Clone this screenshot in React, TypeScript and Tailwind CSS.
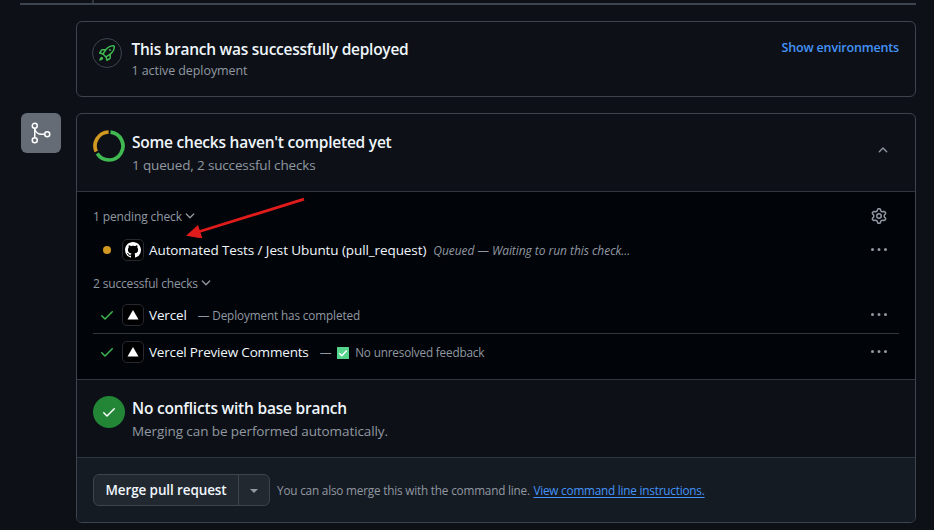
import type { ReactNode } from 'react';

const paths = {
  rocket:
    'M14.064 0h.186C15.216 0 16 .784 16 1.75v.186a8.752 8.752 0 0 1-2.564 6.186l-.458.459c-.314.314-.641.616-.979.904v3.207c0 .608-.315 1.172-.833 1.49l-2.774 1.707a.749.749 0 0 1-1.11-.418l-.954-3.102a1.214 1.214 0 0 1-.145-.125L3.754 9.816a1.218 1.218 0 0 1-.124-.145L.528 8.717a.749.749 0 0 1-.418-1.11l1.71-2.774A1.748 1.748 0 0 1 3.31 4h3.204c.288-.338.59-.665.904-.979l.459-.458A8.749 8.749 0 0 1 14.064 0ZM8.938 3.623h-.002l-.458.458c-.76.76-1.437 1.598-2.02 2.5l-1.5 2.317 2.143 2.143 2.317-1.5c.902-.583 1.74-1.26 2.499-2.02l.459-.458a7.25 7.25 0 0 0 2.123-5.127V1.75a.25.25 0 0 0-.25-.25h-.186a7.249 7.249 0 0 0-5.125 2.123ZM3.56 14.56c-.732.732-2.334 1.045-3.005 1.148a.234.234 0 0 1-.201-.064.234.234 0 0 1-.064-.201c.103-.671.416-2.273 1.15-3.003a1.502 1.502 0 1 1 2.12 2.12Zm6.94-3.935c-.088.06-.177.118-.266.175l-2.35 1.521.548 1.783 1.949-1.2a.25.25 0 0 0 .119-.213ZM3.678 8.116 5.2 5.766c.058-.09.117-.178.176-.266H3.309a.25.25 0 0 0-.213.119l-1.2 1.95ZM12 5a1 1 0 1 1-2 0 1 1 0 0 1 2 0Z',
  gear:
    'M8 0a8.2 8.2 0 0 1 .701.031C9.444.095 9.99.645 10.16 1.29l.288 1.107c.018.066.079.158.212.224.231.114.454.243.668.386.123.082.233.09.299.071l1.103-.303c.644-.176 1.392.021 1.82.63.27.385.506.792.704 1.218.315.675.111 1.422-.364 1.891l-.814.806c-.049.048-.098.147-.088.294.016.257.016.515 0 .772-.01.147.038.246.088.294l.814.806c.475.469.679 1.216.364 1.891a7.977 7.977 0 0 1-.704 1.217c-.428.61-1.176.807-1.82.63l-1.102-.302c-.067-.019-.177-.011-.3.071a5.909 5.909 0 0 1-.668.386c-.133.066-.194.158-.211.224l-.29 1.106c-.168.646-.715 1.196-1.458 1.26a8.006 8.006 0 0 1-1.402 0c-.743-.064-1.289-.614-1.458-1.26l-.289-1.106c-.018-.066-.079-.158-.212-.224a5.738 5.738 0 0 1-.668-.386c-.123-.082-.233-.09-.299-.071l-1.103.303c-.644.176-1.392-.021-1.82-.63a8.12 8.12 0 0 1-.704-1.218c-.315-.675-.111-1.422.363-1.891l.815-.806c.05-.048.098-.147.088-.294a6.214 6.214 0 0 1 0-.772c.01-.147-.038-.246-.088-.294l-.815-.806C.635 6.045.431 5.298.746 4.623a7.92 7.92 0 0 1 .704-1.217c.428-.61 1.176-.807 1.82-.63l1.102.302c.067.019.177.011.3-.071.214-.143.437-.272.668-.386.133-.066.194-.158.211-.224l.29-1.106C6.009.645 6.556.095 7.299.03 7.53.01 7.764 0 8 0Zm-.571 1.525c-.036.003-.108.036-.137.146l-.289 1.105c-.147.561-.549.967-.998 1.189-.173.086-.34.183-.5.29-.417.278-.97.423-1.529.27l-1.103-.303c-.109-.03-.175.016-.195.045-.22.312-.412.644-.573.99-.014.031-.021.11.059.19l.815.806c.411.406.562.957.53 1.456a4.709 4.709 0 0 0 0 .582c.032.499-.119 1.05-.53 1.456l-.815.806c-.081.08-.073.159-.059.19.162.346.353.677.573.989.02.03.085.076.195.046l1.102-.303c.56-.153 1.113-.008 1.53.27.161.107.328.204.501.29.447.222.85.629.997 1.189l.289 1.105c.029.109.101.143.137.146a6.6 6.6 0 0 0 1.142 0c.036-.003.108-.036.137-.146l.289-1.105c.147-.561.549-.967.998-1.189.173-.086.34-.183.5-.29.417-.278.97-.423 1.529-.27l1.103.303c.109.029.175-.016.195-.045.22-.313.411-.644.573-.99.014-.031.021-.11-.059-.19l-.815-.806c-.411-.406-.562-.957-.53-1.456a4.709 4.709 0 0 0 0-.582c-.032-.499.119-1.05.53-1.456l.815-.806c.081-.08.073-.159.059-.19a6.464 6.464 0 0 0-.573-.989c-.02-.03-.085-.076-.195-.046l-1.102.303c-.56.153-1.113.008-1.53-.27a4.44 4.44 0 0 0-.501-.29c-.447-.222-.85-.629-.997-1.189l-.289-1.105c-.029-.11-.101-.143-.137-.146a6.6 6.6 0 0 0-1.142 0ZM11 8a3 3 0 1 1-6 0 3 3 0 0 1 6 0ZM9.5 8a1.5 1.5 0 1 0-3.001.001A1.5 1.5 0 0 0 9.5 8Z',
  check:
    'M13.78 4.22a.75.75 0 0 1 0 1.06l-7.25 7.25a.75.75 0 0 1-1.06 0L2.22 9.28a.751.751 0 0 1 .018-1.042.751.751 0 0 1 1.042-.018L6 10.94l6.72-6.72a.75.75 0 0 1 1.06 0Z',
  chevronDown:
    'M12.78 5.22a.749.749 0 0 1 0 1.06l-4.25 4.25a.749.749 0 0 1-1.06 0L3.22 6.28a.749.749 0 1 1 1.06-1.06L8 8.939l3.72-3.719a.749.749 0 0 1 1.06 0Z',
  chevronUp:
    'M3.22 10.53a.749.749 0 0 1 0-1.06l4.25-4.25a.749.749 0 0 1 1.06 0l4.25 4.25a.749.749 0 1 1-1.06 1.06L8 6.811 4.28 10.53a.749.749 0 0 1-1.06 0Z',
  kebab:
    'M8 9a1.5 1.5 0 1 0 0-3 1.5 1.5 0 0 0 0 3ZM1.5 9a1.5 1.5 0 1 0 0-3 1.5 1.5 0 0 0 0 3Zm13 0a1.5 1.5 0 1 0 0-3 1.5 1.5 0 0 0 0 3Z',
  github:
    'M8 0c4.42 0 8 3.58 8 8a8.013 8.013 0 0 1-5.45 7.59c-.4.08-.55-.17-.55-.38 0-.27.01-1.13.01-2.2 0-.75-.25-1.23-.54-1.48 1.78-.2 3.65-.88 3.65-3.95 0-.88-.31-1.59-.82-2.15.08-.2.36-1.02-.08-2.12 0 0-.67-.22-2.2.82-.64-.18-1.32-.27-2-.27-.68 0-1.36.09-2 .27-1.53-1.03-2.2-.82-2.2-.82-.44 1.1-.16 1.92-.08 2.12-.51.56-.82 1.28-.82 2.15 0 3.06 1.86 3.75 3.64 3.95-.23.2-.44.55-.51 1.07-.46.21-1.61.55-2.33-.66-.15-.24-.6-.83-1.23-.82-.67.01-.27.38.01.53.34.19.73.9.82 1.13.16.45.68 1.31 2.69.94 0 .67.01 1.3.01 1.49 0 .21-.15.45-.55.38A7.995 7.995 0 0 1 0 8c0-4.42 3.58-8 8-8Z',
};

function Icon({ name, className }: { name: keyof typeof paths; className: string }) {
  return (
    <svg viewBox="0 0 16 16" fill="currentColor" className={`shrink-0 ${className}`}>
      <path d={paths[name]} />
    </svg>
  );
}

function MergeIcon() {
  return (
    <svg viewBox="0 0 24 24" fill="none" stroke="currentColor" strokeWidth="1.5" className="size-6 text-white">
      <circle cx="5.75" cy="4.75" r="2.5" />
      <circle cx="5.75" cy="19.25" r="2.5" />
      <circle cx="18.25" cy="13.25" r="2.5" />
      <path d="M5.75 7.25v9.5M5.75 7.25c.5 3.5 3.5 6 7 6h3" />
    </svg>
  );
}

function StatusRing() {
  return (
    <svg viewBox="0 0 32 32" fill="none" strokeWidth="3.7" className="size-8 shrink-0">
      <path d="M17.5 2.08A14 14 0 1 1 4.2 23.6" stroke="#3fb950" />
      <path d="M3.2 21.6A14 14 0 0 1 15.6 2" stroke="#d29922" />
    </svg>
  );
}

function Avatar({ children }: { children: ReactNode }) {
  return (
    <span className="flex size-[22px] shrink-0 items-center justify-center rounded-[5px] border border-[#26292e] bg-black text-white">
      {children}
    </span>
  );
}

function Triangle() {
  return (
    <svg viewBox="0 0 12 10" className="h-[10px] w-[12px]">
      <path d="M6 0 11.5 9.5H.5Z" fill="#fff" />
    </svg>
  );
}

function Row({ status, avatar, title, note }: { status: ReactNode; avatar: ReactNode; title: ReactNode; note: ReactNode }) {
  return (
    <div className="flex h-9 items-center">
      <span className="flex w-7 justify-center">{status}</span>
      <span className="ml-px flex">
        <Avatar>{avatar}</Avatar>
      </span>
      <span className="ml-[5px] text-[13.5px] font-medium text-[#f0f6fc]">{title}</span>
      {note}
      <Icon name="kebab" className="mr-3 ml-auto size-4 text-[#9198a1]" />
    </div>
  );
}

export default function App() {
  return (
    <div className="relative h-[530px] w-[934px] overflow-hidden bg-[#0d1117] font-['Open_Sans','Noto_Sans',sans-serif] whitespace-nowrap text-[#9198a1]">
      <div className="ml-5 h-[5px] w-[896px] border-b-2 border-[#3d444d]">
        <div className="ml-[72px] h-[3px] w-[2px] bg-[#30363d]" />
      </div>

      <div className="mt-4 ml-[76px] flex h-[76px] w-[840px] items-start rounded-md border border-[#3d444d] pt-4 pr-4 pl-[15px]">
        <span className="flex size-[30px] items-center justify-center rounded-full border border-[#3d444d] text-[#3fb950]">
          <Icon name="rocket" className="size-4" />
        </span>
        <div className="ml-[9.5px]">
          <h3 className="text-[15.5px] leading-[23px] font-semibold tracking-[-0.26px] text-[#f0f6fc]">
            This branch was successfully deployed
          </h3>
          <p className="text-[12.5px] leading-5 tracking-[-0.075px]">1 active deployment</p>
        </div>
        <a className="ml-auto text-[12.5px] leading-5 font-semibold tracking-[-0.163px] text-[#4493f8]">Show environments</a>
      </div>

      <div className="mt-4 flex">
        <span className="mr-[15px] ml-[21px] flex size-10 items-center justify-center rounded-md bg-[#656c76]">
          <MergeIcon />
        </span>
        <div className="h-[410px] w-[840px] overflow-hidden rounded-md border border-[#3d444d]">
          <div className="flex h-[78px] items-start border-b border-[#30363d] pt-4 pl-4">
            <StatusRing />
            <div className="ml-[7px]">
              <h3 className="text-[15.5px] leading-[25px] font-semibold tracking-[-0.231px] text-[#f0f6fc]">
                Some checks haven't completed yet
              </h3>
              <p className="text-[13.5px] leading-[21px] tracking-[-0.15px]">1 queued, 2 successful checks</p>
            </div>
            <Icon name="chevronUp" className="mt-[13px] mr-[25px] ml-auto size-[14px]" />
          </div>

          <div className="h-[188px] border-b border-[#30363d] bg-[#010409] px-4 pt-[14px]">
            <div className="flex h-[21px] items-center text-xs font-medium">
              <span className="tracking-[-0.12px]">1 pending check</span>
              <Icon name="chevronDown" className="mb-px ml-[1px] size-[14px]" />
              <Icon name="gear" className="mr-3 mb-[2px] ml-auto size-4" />
            </div>
            <div className="mt-[5px]">
              <Row
                status={<i className="size-2 rounded-full bg-[#d29922]" />}
                avatar={<Icon name="github" className="size-4" />}
                title={<span className="tracking-[-0.095px]">Automated Tests / Jest Ubuntu (pull_request)</span>}
                note={
                  <span className="mt-px ml-[7px] text-xs tracking-[-0.05px] italic">Queued — Waiting to run this check...</span>
                }
              />
            </div>
            <div className="mt-[5px] flex h-[21px] items-center text-xs font-medium">
              <span className="tracking-[-0.16px]">2 successful checks</span>
              <Icon name="chevronDown" className="mb-px ml-[1px] size-[14px]" />
            </div>
            <div className="mt-[3px] h-[37px] border-b border-[#30363d]">
              <Row
                status={<Icon name="check" className="size-4 text-[#3fb950]" />}
                avatar={<Triangle />}
                title={<span className="tracking-[-0.15px]">Vercel</span>}
                note={<span className="mt-px ml-[11px] text-[11.75px] tracking-[-0.13px]">— Deployment has completed</span>}
              />
            </div>
            <Row
              status={<Icon name="check" className="size-4 text-[#3fb950]" />}
              avatar={<Triangle />}
              title={<span className="tracking-[-0.18px]">Vercel Preview Comments</span>}
              note={
                <span className="mt-px ml-[11px] flex items-center text-[11.75px] tracking-[-0.18px]">
                  <span>—</span>
                  <svg viewBox="0 0 12 12" className="mr-[6px] ml-[6px] size-3">
                    <rect width="12" height="12" rx="0.5" fill="#55d48b" />
                    <path d="m2.3 6.2 2.6 2.5 4.8-5.2" fill="none" stroke="#fff" strokeWidth="1.5" />
                  </svg>
                  <span>No unresolved feedback</span>
                </span>
              }
            />
          </div>

          <div className="flex h-[78px] items-start border-b border-[#30363d] pt-4 pl-4">
            <span className="flex size-8 items-center justify-center rounded-full bg-[#238636] text-white">
              <Icon name="check" className="size-4" />
            </span>
            <div className="ml-[7px]">
              <h3 className="text-[15.5px] leading-[25px] font-semibold tracking-[-0.211px] text-[#f0f6fc]">
                No conflicts with base branch
              </h3>
              <p className="text-[13.5px] leading-[21px] tracking-[-0.093px]">Merging can be performed automatically.</p>
            </div>
          </div>

          <div className="flex h-[64px] items-center bg-[#151b23] pl-4">
            <div className="flex h-8 w-[177px] overflow-hidden rounded-md border border-[#3d444d] bg-[#212830]">
              <button className="w-[145px] border-r border-[#3d444d] text-[13.5px] font-semibold tracking-[-0.117px] text-[#f0f6fc]">
                Merge pull request
              </button>
              <button className="flex flex-1 items-center justify-center">
                <svg viewBox="0 0 8 4" className="mt-px h-1 w-2">
                  <path d="M0 0h8L4 4Z" fill="#9198a1" />
                </svg>
              </button>
            </div>
            <span className="mt-px ml-[7px] text-[11.75px] tracking-[-0.19px]">You can also merge this with the command line.</span>
            <a className="mt-px ml-[3.5px] text-[11.75px] tracking-[-0.21px] text-[#4493f8] underline underline-offset-2">
              View command line instructions.
            </a>
          </div>
        </div>
      </div>

      <svg viewBox="0 0 120 42" className="absolute top-[196px] left-[186px] h-[42px] w-[120px]">
        <path d="M118 3.2 12 36" stroke="#e01b1b" strokeWidth="2.8" />
        <path d="M0 39.8 12 29 16.5 42.5Z" fill="#e01b1b" />
      </svg>
    </div>
  );
}
